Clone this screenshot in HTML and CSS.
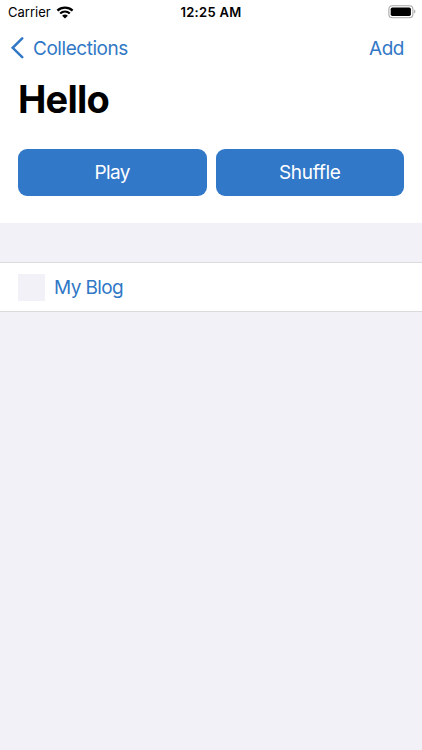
FILE: index.html
```html
<!DOCTYPE html>
<html lang="en">
<head>
    <meta charset="UTF-8">
    <meta name="viewport" content="width=device-width, initial-scale=1.0">
    <title>Hello</title>
    <link rel="stylesheet" href="styles.css">
</head>
<body>
    <header>
        <div class="status-bar">
            <div class="carrier">
                <span>Carrier</span>
                <svg class="wifi" width="18" height="13" viewBox="0 0 18 13">
                    <path d="M1.4 4.6C5.6 .6 12.4 .6 16.6 4.6M4.2 7.5C7 4.9 11 4.9 13.8 7.5" fill="none" stroke="#000" stroke-width="2.3"/>
                    <path d="M9 12.6L6.1 9.7C7.7 8.2 10.3 8.2 11.9 9.7Z"/>
                </svg>
            </div>
            <span class="time">12:25 AM</span>
            <svg class="battery" width="28" height="14" viewBox="0 0 28 14">
                <rect x=".9" y=".7" width="24" height="12" rx="3.4" fill="none" stroke="#a8a8a8" stroke-width="1.1"/>
                <rect x="2.7" y="2.5" width="20.2" height="8.4" rx="1.7"/>
                <path d="M26.2 4.6C27.9 5.2 27.9 8 26.2 8.6Z" fill="#a8a8a8"/>
            </svg>
        </div>
        <nav>
            <a class="back" href="#">
                <svg width="14" height="22" viewBox="0 0 14 22">
                    <path d="M12.2 1.4L2.7 10.8L12.2 20.2" fill="none" stroke="currentColor" stroke-width="2.5" stroke-linecap="round" stroke-linejoin="miter"/>
                </svg>
                <span>Collections</span>
            </a>
            <a class="add" href="#">Add</a>
        </nav>
        <h1>Hello</h1>
        <div class="buttons">
            <button>Play</button>
            <button class="shuffle">Shuffle</button>
        </div>
    </header>
    <ul class="feed-list">
        <li>
            <div class="thumb"></div>
            <a href="#">My Blog</a>
        </li>
    </ul>
</body>
</html>
```
FILE: styles.css
```css
* {
    box-sizing: border-box;
}
body {
    margin: 0;
    min-height: 750px;
    background-color: #f2f1f7;
    font-family: Inter, sans-serif;
    font-size: 19px;
    letter-spacing: -0.45px;
    color: #000;
}
header {
    height: 223px;
    background-color: #fff;
}
a {
    color: #3178c6;
    text-decoration: none;
}
.status-bar {
    display: grid;
    grid-template-columns: 1fr auto 1fr;
    align-items: center;
    height: 24px;
    padding: 0 6px 0 8px;
    font-size: 13px;
    letter-spacing: 0;
}
.carrier {
    display: flex;
    align-items: center;
    gap: 5px;
}
.time {
    margin-right: 2px;
    font-weight: 600;
    letter-spacing: 0.3px;
}
.battery {
    justify-self: end;
}
nav {
    display: flex;
    justify-content: space-between;
    align-items: center;
    height: 48px;
    padding: 0 18px 0 10px;
}
.back {
    display: flex;
    align-items: center;
    gap: 9px;
}
h1 {
    margin: 0;
    padding: 0 18px;
    height: 77px;
    line-height: 55px;
    font-size: 38px;
    font-weight: 700;
    letter-spacing: -0.8px;
}
.buttons {
    display: flex;
    gap: 9px;
    padding: 0 18px;
}
button {
    flex: 1;
    height: 47px;
    padding: 0;
    border: none;
    border-radius: 9px;
    background-color: #3178c9;
    color: #fff;
    font-family: inherit;
    font-size: 19px;
    letter-spacing: -0.6px;
}
.shuffle {
    letter-spacing: -0.3px;
}
.feed-list {
    list-style: none;
    margin: 39px 0 0;
    padding: 0;
}
.feed-list li {
    display: flex;
    align-items: center;
    gap: 9px;
    height: 50px;
    padding: 1px 18px 0;
    background-color: #fff;
    border-top: 1px solid #dbdbde;
    border-bottom: 1px solid #dbdbde;
    letter-spacing: -0.6px;
}
.thumb {
    width: 27px;
    height: 27px;
    background-color: #f2f1f7;
}
```
